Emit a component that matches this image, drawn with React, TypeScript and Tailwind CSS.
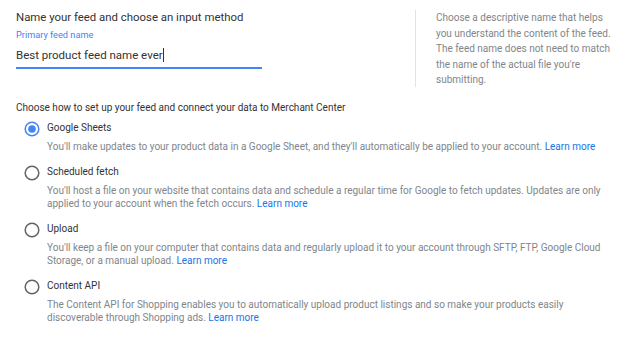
import React from "react";

const options = [
  {
    label: "Google Sheets",
    desc: "You'll make updates to your product data in a Google Sheet, and they'll automatically be applied to your account.",
    selected: true,
  },
  {
    label: "Scheduled fetch",
    desc: "You'll host a file on your website that contains data and schedule a regular time for Google to fetch updates. Updates are only applied to your account when the fetch occurs.",
    selected: false,
  },
  {
    label: "Upload",
    desc: "You'll keep a file on your computer that contains data and regularly upload it to your account through SFTP, FTP, Google Cloud Storage, or a manual upload.",
    selected: false,
  },
  {
    label: "Content API",
    desc: "The Content API for Shopping enables you to automatically upload product listings and so make your products easily discoverable through Shopping ads.",
    selected: false,
  },
];

function Radio({ selected }: { selected: boolean }) {
  return (
    <svg width="16" height="16" viewBox="0 0 16 16" className="shrink-0 block">
      <circle
        cx="8"
        cy="8"
        r="6.8"
        fill="none"
        stroke={selected ? "#4285f4" : "#5f6368"}
        strokeWidth="1.5"
      />
      {selected && <circle cx="8" cy="8" r="3.8" fill="#4285f4" />}
    </svg>
  );
}

export default function App() {
  return (
    <div
      className="w-[640px] h-[350px] bg-white overflow-hidden px-4"
      style={{ fontFamily: "Roboto, 'Liberation Sans', sans-serif" }}
    >
      <div className="flex pt-[10px]">
        <div className="w-[399px] shrink-0">
          <div className="text-[11.4px] leading-[14px] text-[#333333]">
            Name your feed and choose an input method
          </div>
          <div className="mt-[5px] text-[9.2px] leading-[12px] text-[#4285f4]">
            Primary feed name
          </div>
          <div className="mt-[6px] w-[246px] border-b-2 border-[#4285f4] pb-[4px] text-[11.5px] leading-[16px] text-[#333333] flex items-center">
            <span>Best product feed name ever</span>
            <span className="inline-block w-px h-[14px] bg-[#333333]" />
          </div>
        </div>
        <div className="border-l border-[#e3e3e3] pl-5 h-[77px] text-[10px] leading-[15.5px] text-[#80868b] w-[196px]">
          Choose a descriptive name that helps you understand the content of the feed. The feed name does not need to match the name of the actual file you're submitting.
        </div>
      </div>

      <div className="mt-[13.5px] text-[10px] leading-[13px] text-[#333333]">
        Choose how to set up your feed and connect your data to Merchant Center
      </div>

      <div className="mt-[7.5px] flex flex-col gap-[12.5px]">
        {options.map((o) => (
          <div key={o.label} className="flex pl-[8px]">
            <div className="pt-[-1px]">
              <Radio selected={o.selected} />
            </div>
            <div className="ml-[7px] w-[556px]">
              <div className="text-[10px] leading-[14px] text-[#333333]">{o.label}</div>
              <div className="mt-[4.5px] text-[10px] leading-[13px] text-[#80868b]">
                {o.desc} <span className="text-[#1a73e8]">Learn more</span>
              </div>
            </div>
          </div>
        ))}
      </div>
    </div>
  );
}
